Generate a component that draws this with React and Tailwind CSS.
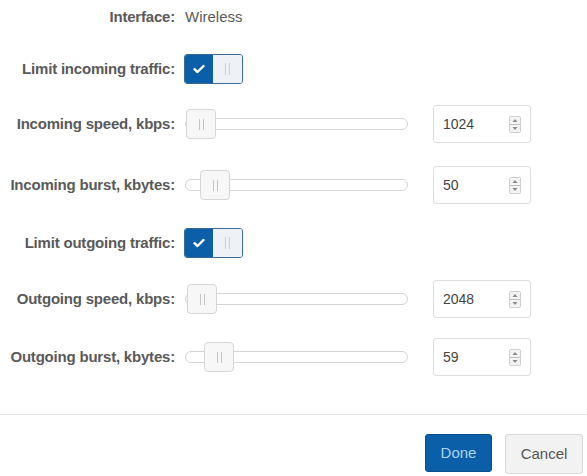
import React, { useState } from "react";

const font = { fontFamily: '"Liberation Sans", Arial, sans-serif' };

const Toggle = ({ on, onClick }) => (
  <button
    onClick={onClick}
    className="flex h-[30px] w-[59px] overflow-hidden rounded-[3px] border border-[#3d6a94]"
  >
    <span className="flex w-[28px] items-center justify-center bg-[#0b5fa8]">
      {on && (
        <svg width="12" height="10" viewBox="0 0 12 10">
          <path d="M1.5 5.2 L4.5 8 L10.5 2" fill="none" stroke="#fff" strokeWidth="2.4" strokeLinecap="round" strokeLinejoin="round" />
        </svg>
      )}
    </span>
    <span className="flex flex-1 items-center justify-center gap-[3px] bg-[#eef1f5]">
      <span className="h-[12px] w-px bg-[#c9cfd6]" />
      <span className="h-[12px] w-px bg-[#c9cfd6]" />
    </span>
  </button>
);

const Slider = ({ pos }) => (
  <div className="relative h-[30px] w-[223px]">
    <div className="absolute left-0 right-0 top-[9px] h-[12px] rounded-full border border-[#d4d4d4] bg-white" />
    <div
      className="absolute top-0 flex h-[30px] w-[30px] items-center justify-center gap-[3px] rounded-[4px] border border-[#d6d6d6] bg-[#f7f7f7]"
      style={{ left: pos }}
    >
      <span className="h-[11px] w-px bg-[#c4c4c4]" />
      <span className="h-[11px] w-px bg-[#c4c4c4]" />
    </div>
  </div>
);

const Spin = ({ value }) => (
  <div className="flex h-[38px] w-[98px] items-center justify-between rounded-[3px] border border-[#dedede] bg-white pl-[9px] pr-[9px]">
    <span className="text-[14px] text-[#444]">{value}</span>
    <svg width="12" height="17" viewBox="0 0 12 17">
      <rect x="0.5" y="0.5" width="11" height="16" rx="1" fill="#f3f3f3" stroke="#cfcfcf" />
      <line x1="1" y1="8.5" x2="11" y2="8.5" stroke="#c2c2c2" />
      <path d="M3.5 6 L6 3 L8.5 6 Z" fill="#8a8a8a" />
      <path d="M3.5 11 L6 14 L8.5 11 Z" fill="#8a8a8a" />
    </svg>
  </div>
);

const Label = ({ children }) => (
  <div className="w-[175px] shrink-0 whitespace-nowrap text-right text-[15px] font-bold tracking-[-0.2px] text-[#5a5a5a]">{children}</div>
);

const App = () => {
  const [inOn, setInOn] = useState(true);
  const [outOn, setOutOn] = useState(true);

  const sliderRow = (label, pos, value, mt) => (
    <div className={`flex h-[38px] items-center ${mt}`}>
      <Label>{label}</Label>
      <div className="ml-[10px]">
        <Slider pos={pos} />
      </div>
      <div className="ml-[25px]">
        <Spin value={value} />
      </div>
    </div>
  );

  return (
    <div className="h-[476px] w-[587px] overflow-hidden bg-white" style={font}>
      <div className="flex flex-col pt-[7px]">
        <div className="flex h-[20px] items-center">
          <Label>Interface:</Label>
          <span className="ml-[10px] text-[15px] text-[#5a5a5a]">Wireless</span>
        </div>
        <div className="mt-[27px] flex h-[30px] items-center">
          <Label>Limit incoming traffic:</Label>
          <div className="ml-[9px]">
            <Toggle on={inOn} onClick={() => setInOn(!inOn)} />
          </div>
        </div>
        {sliderRow("Incoming speed, kbps:", 1, "1024", "mt-[21px]")}
        {sliderRow("Incoming burst, kbytes:", 15, "50", "mt-[23px]")}
        <div className="mt-[24px] flex h-[30px] items-center">
          <Label>Limit outgoing traffic:</Label>
          <div className="ml-[9px]">
            <Toggle on={outOn} onClick={() => setOutOn(!outOn)} />
          </div>
        </div>
        {sliderRow("Outgoing speed, kbps:", 2, "2048", "mt-[22px]")}
        {sliderRow("Outgoing burst, kbytes:", 19, "59", "mt-[20px]")}
        <div className="mt-[38px] border-t border-[#e8e8e8]" />
        <div className="mt-[19px] flex justify-end gap-[13px] pr-[4px]">
          <button className="h-[38px] w-[67px] rounded-[3px] border border-[#0a4f8c] bg-[#0b5fa8] text-[15px] text-[#a9d3f5]">
            Done
          </button>
          <button className="h-[40px] w-[78px] rounded-[3px] border border-[#d9d9d9] bg-[#f2f2f2] text-[15px] text-[#555]">
            Cancel
          </button>
        </div>
      </div>
    </div>
  );
};

export default App;
